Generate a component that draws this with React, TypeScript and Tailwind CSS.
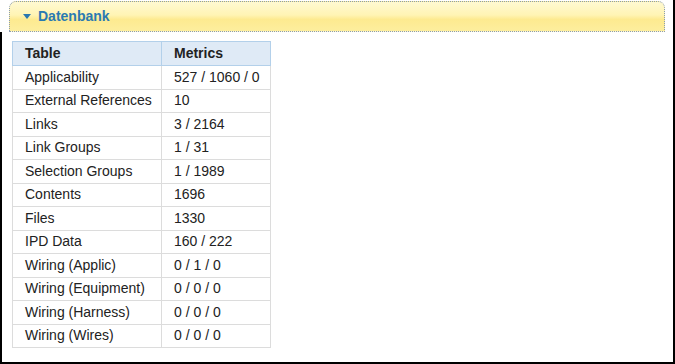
const rows: [string, string][] = [
  ['Applicability', '527 / 1060 / 0'],
  ['External References', '10'],
  ['Links', '3 / 2164'],
  ['Link Groups', '1 / 31'],
  ['Selection Groups', '1 / 1989'],
  ['Contents', '1696'],
  ['Files', '1330'],
  ['IPD Data', '160 / 222'],
  ['Wiring (Applic)', '0 / 1 / 0'],
  ['Wiring (Equipment)', '0 / 0 / 0'],
  ['Wiring (Harness)', '0 / 0 / 0'],
  ['Wiring (Wires)', '0 / 0 / 0'],
];

export default function App() {
  return (
    <div className="w-[675px] h-[364px] bg-white font-['Liberation_Sans',Arial,sans-serif] text-[14px] text-[#222] relative overflow-hidden">
      <div className="h-full border-r-2 border-b-2 border-black">
        <div className="ml-[9px] mr-[8px] pt-[1px]">
          <div className="h-[31px] rounded-t-[7px] border border-dotted border-[#8a9bb0] bg-[linear-gradient(to_bottom,#fff9d2_0%,#fff4b4_45%,#fdea90_60%,#fdee9e_100%)] flex items-center pl-[13px]">
            <svg width="8" height="6" viewBox="0 0 8 6" className="mr-[7px]">
              <path d="M0 0 L8 0 L4 5 Z" fill="#2a78b0" />
            </svg>
            <span className="font-bold text-[#2a7ab2] text-[14px]">Datenbank</span>
          </div>
        </div>
        <div className="flex h-[332px]">
          <div className="w-[2px] bg-black shrink-0" />
          <div className="pl-[10px] pt-[9px]">
            <table className="border-collapse w-[259px]">
              <thead>
                <tr className="h-[24px] bg-[#dfeaf6]">
                  <th className="w-[149px] border border-[#b3d0ea] text-left font-bold pl-[12px] py-0">Table</th>
                  <th className="border border-[#b3d0ea] text-left font-bold pl-[12px] py-0">Metrics</th>
                </tr>
              </thead>
              <tbody>
                {rows.map(([name, value]) => (
                  <tr key={name} className="h-[23.5px]">
                    <td className="border border-[#dcdcdc] pl-[12px] py-0">{name}</td>
                    <td className="border border-[#dcdcdc] pl-[12px] py-0">{value}</td>
                  </tr>
                ))}
              </tbody>
            </table>
          </div>
        </div>
      </div>
    </div>
  );
}
